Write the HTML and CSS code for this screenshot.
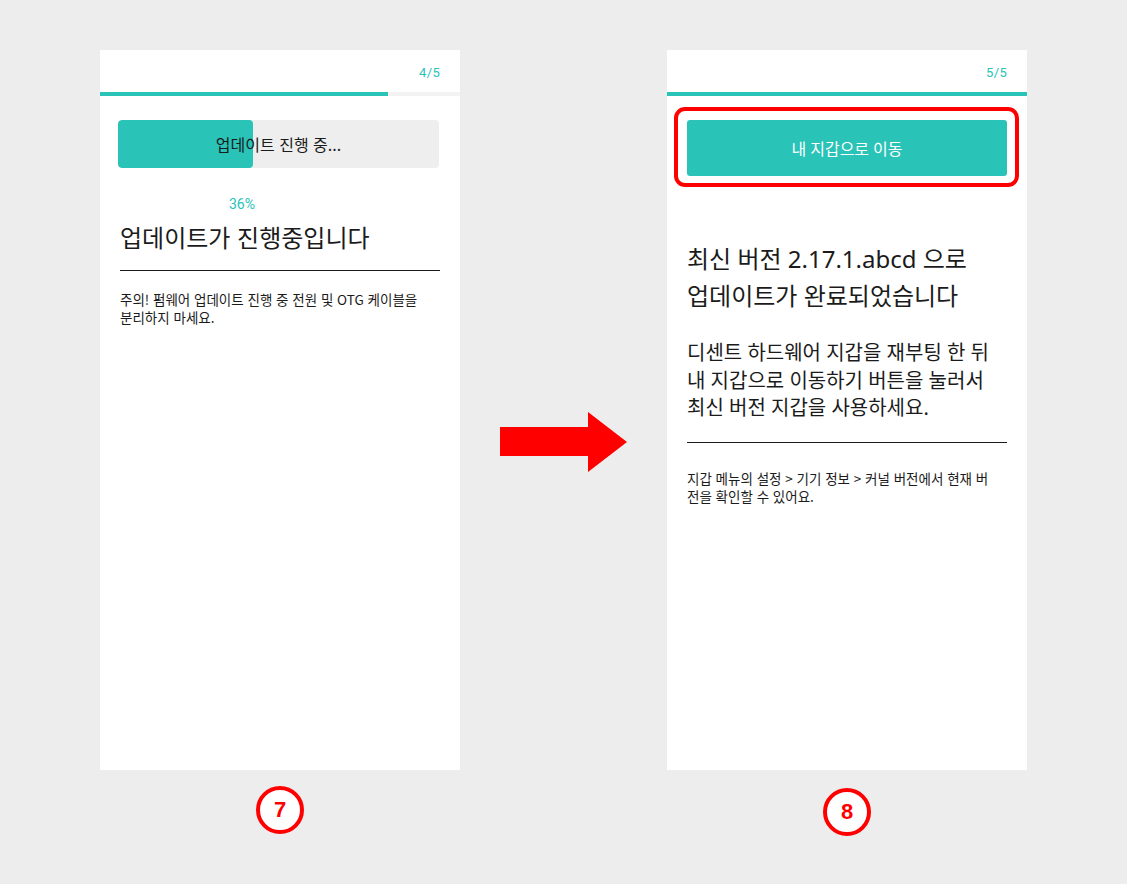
FILE: index.html
```html
<!DOCTYPE html>
<html lang="ko">
<head>
<meta charset="utf-8">
<title>Firmware update</title>
<link rel="stylesheet" href="styles.css">
</head>
<body>
<main class="stage">
  <section class="col">
    <div class="panel">
      <div class="header"><span class="step">4/5</span></div>
      <div class="track"><div class="track-fill" style="width:80%"></div></div>
      <div class="content">
        <div class="pbox">
          <div class="pbox-fill" style="width:42%"></div>
          <span class="pbox-label">업데이트 진행 중...</span>
        </div>
        <div class="percent">36%</div>
        <h1 class="title-sm">업데이트가 진행중입니다</h1>
        <hr class="rule rule-left">
        <p class="note note-left">주의! 펌웨어 업데이트 진행 중 전원 및 OTG 케이블을 분리하지 마세요.</p>
      </div>
    </div>
    <div class="badge">7</div>
  </section>

  <div class="arrow-col">
    <svg class="arrow" width="127" height="60" viewBox="0 0 127 60">
      <polygon points="0,15 88,15 88,0 127,30 88,60 88,44 0,44" fill="#ff0000"/>
    </svg>
  </div>

  <section class="col">
    <div class="panel">
      <div class="header"><span class="step">5/5</span></div>
      <div class="track"><div class="track-fill" style="width:100%"></div></div>
      <div class="content">
        <div class="btn-wrap">
          <button class="btn">내 지갑으로 이동</button>
          <div class="highlight"></div>
        </div>
        <h1 class="title-lg">최신 버전 2.17.1.abcd 으로<br>업데이트가 완료되었습니다</h1>
        <p class="lead">디센트 하드웨어 지갑을 재부팅 한 뒤<br>내 지갑으로 이동하기 버튼을 눌러서<br>최신 버전 지갑을 사용하세요.</p>
        <hr class="rule rule-right">
        <p class="note note-right">지갑 메뉴의 설정 &gt; 기기 정보 &gt; 커널 버전에서 현재 버전을 확인할 수 있어요.</p>
      </div>
    </div>
    <div class="badge badge-right">8</div>
  </section>
</main>
</body>
</html>
```

FILE: styles.css
```css
* { box-sizing: border-box; }

html, body {
  margin: 0;
  padding: 0;
  background: #ededed;
}

body {
  font-family: "Noto Sans", "Noto Sans CJK KR", sans-serif;
  color: #1b1b1b;
}

.stage {
  display: flex;
  align-items: flex-start;
  padding: 50px 0 0 100px;
}

.col {
  display: flex;
  flex-direction: column;
  align-items: center;
  width: 360px;
}

.panel {
  width: 360px;
  height: 720px;
  background: #ffffff;
}

.header {
  height: 42px;
  display: flex;
  justify-content: flex-end;
  align-items: center;
  padding: 2px 20px 0 0;
}

.step {
  font-family: Roboto, "Noto Sans CJK KR", sans-serif;
  font-size: 13px;
  color: #2ac3b7;
  letter-spacing: 0.3px;
}

.track {
  height: 4px;
  background: #f3f3f3;
}

.track-fill {
  height: 100%;
  background: #2ac3b7;
}

.content {
  padding: 0 20px;
}

.pbox {
  position: relative;
  margin: 24px 1px 0 -2px;
  height: 48px;
  border-radius: 4px;
  background: #eeeeee;
  overflow: hidden;
  display: flex;
  align-items: center;
  justify-content: center;
}

.pbox-fill {
  position: absolute;
  left: 0;
  top: 0;
  bottom: 0;
  background: #2ac3b7;
  border-radius: 4px;
}

.pbox-label {
  position: relative;
  font-family: "Noto Sans CJK KR", sans-serif;
  font-size: 16px;
  color: #1b1b1b;
}

.percent {
  margin: 27px 0 0 109px;
  font-family: Roboto, sans-serif;
  font-size: 14px;
  line-height: 18px;
  color: #2ac3b7;
}

.title-sm {
  margin: 8px 0 0;
  font-family: "Noto Sans CJK KR", sans-serif;
  font-weight: 400;
  font-size: 24px;
  line-height: 32px;
  color: #1b1b1b;
}

.rule {
  border: 0;
  height: 1px;
  background: #1b1b1b;
  margin: 0;
}

.rule-left { margin-top: 17px; }

.note {
  margin: 17px 0 0;
  padding-right: 14px;
  font-family: "Noto Sans CJK KR", sans-serif;
  font-size: 13.5px;
  line-height: 18px;
  color: #1b1b1b;
  word-break: break-all;
}

.note-left { margin-top: 19px; }

.note-right { margin-top: 26px; }

.btn-wrap {
  position: relative;
  margin-top: 24px;
}

.btn {
  display: block;
  width: 100%;
  height: 56px;
  border: 0;
  border-radius: 3px;
  background: #2ac3b7;
  color: #ffffff;
  font-family: Roboto, "Noto Sans CJK KR", sans-serif;
  font-size: 16px;
  padding: 0;
}

.highlight {
  position: absolute;
  top: -13px;
  left: -13px;
  right: -12px;
  bottom: -11px;
  border: 4px solid #ff0000;
  border-radius: 11px;
  pointer-events: none;
}

.title-lg {
  margin: 64px 0 0;
  font-weight: 400;
  font-size: 24px;
  line-height: 37px;
  color: #1b1b1b;
}

.lead {
  margin: 25px 0 0;
  font-size: 20px;
  line-height: 27.5px;
  color: #1b1b1b;
}

.rule-right { margin-top: 20px; }

.arrow-col {
  width: 207px;
  display: flex;
  justify-content: center;
  padding-top: 362px;
}

.arrow { display: block; }

.badge {
  margin-top: 16px;
  width: 48px;
  height: 48px;
  border-radius: 50%;
  border: 4px solid #ff0000;
  background: #ffffff;
  display: flex;
  align-items: center;
  justify-content: center;
  font-family: "Liberation Sans", Arial, sans-serif;
  font-weight: 700;
  font-size: 22px;
  color: #ff0000;
}

.badge-right { margin-top: 18px; }
```
